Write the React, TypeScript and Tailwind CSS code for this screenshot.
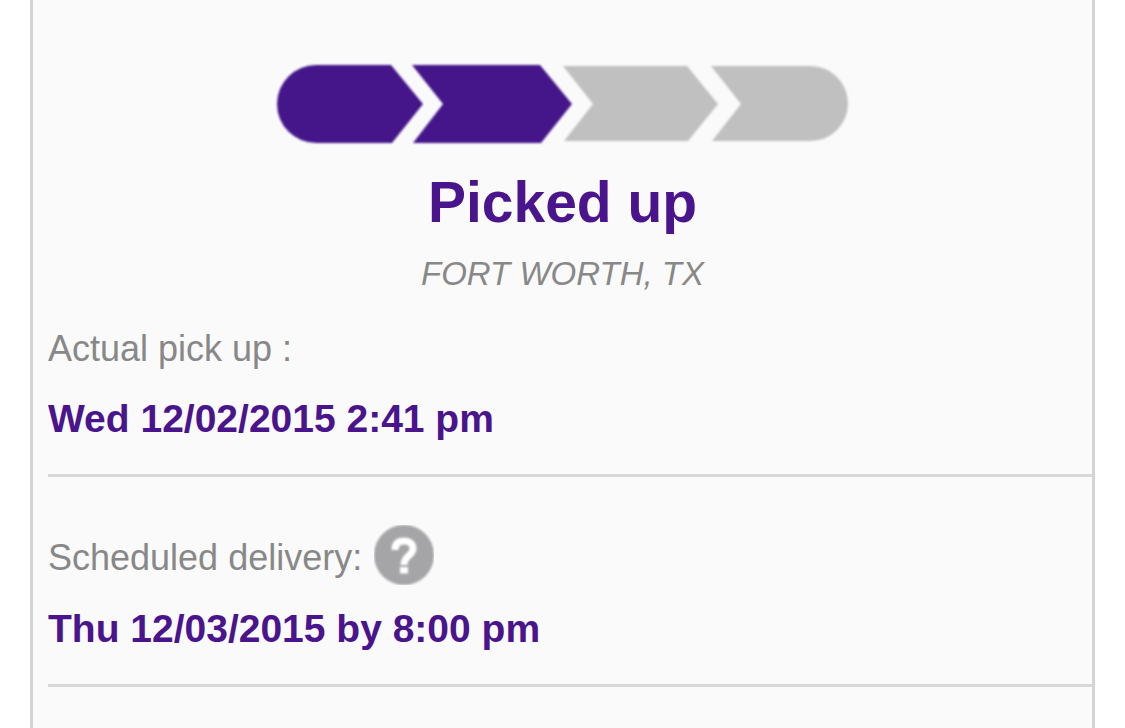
function ProgressBar() {
  return (
    <svg width="575" height="84" viewBox="275 62 575 84" role="img" aria-label="Step 2 of 4" className="block">
      <filter id="soft-steps" x="-5%" y="-5%" width="110%" height="110%" colorInterpolationFilters="sRGB">
        <feGaussianBlur stdDeviation="0.9" />
      </filter>
      <g filter="url(#soft-steps)">
        <path fill="#45158a" d="M316 65H391L423 104L392 143H316A39 39 0 0 1 316 65Z" />
        <path fill="#45158a" d="M412 65H540L572 104L541 143H413L443 104Z" />
        <path fill="#c0c0c0" d="M563 66H687L718 104L688 141H564L593 104Z" />
        <path fill="#c0c0c0" d="M711 66H810.500A37.500 37.500 0 0 1 810.500 141H712L741 104Z" />
      </g>
    </svg>
  );
}

function HelpIcon() {
  return (
    <svg width="60" height="60" viewBox="0 0 60 60" aria-hidden="true" className="block">
      <filter id="soft-help" x="-5%" y="-5%" width="110%" height="110%" colorInterpolationFilters="sRGB">
        <feGaussianBlur stdDeviation="1" />
      </filter>
      <g filter="url(#soft-help)">
        <circle cx="30" cy="30" r="30" fill="#a5a5a8" />
        <path d="M21 25C21 19 24 16 30 16C36 16 39 19 39 23.500C39 31 30 30 30 40" fill="none" stroke="#fff" strokeWidth="7" />
        <rect x="26" y="42" width="8" height="6.500" fill="#fff" />
      </g>
    </svg>
  );
}

export default function App() {
  return (
    <div className="min-h-screen bg-white px-[30px] font-['Liberation_Sans',Arial,sans-serif]">
      <main className="min-h-screen border-x-3 border-[#d6d2d5] bg-[#fafafa] pt-[62px] pl-[15px]">
        <section className="flex flex-col items-center pr-[15px]">
          <ProgressBar />
          <h1 className="mt-6 text-[57px] leading-[64px] font-bold text-[#4a148c]">Picked up</h1>
          <p className="mt-5 text-[33px] leading-10 text-[#888888] italic">FORT WORTH, TX</p>
        </section>
        <dl>
          <div className="border-b-3 border-[#d8d8d8] pt-[35px] pb-[35px]">
            <dt className="text-[36px] leading-10 text-[#888888]">Actual pick up :</dt>
            <dd className="mt-[30px] text-[39px] leading-10 font-bold text-[#4a148c]">Wed 12/02/2015 2:41 pm</dd>
          </div>
          <div className="border-b-3 border-[#d8d8d8] pt-12 pb-[35px]">
            <dt className="flex items-center gap-3 text-[36px] leading-10 text-[#888888]">
              <span className="pt-[6px]">Scheduled delivery:</span>
              <button type="button" aria-label="About scheduled delivery"><HelpIcon /></button>
            </dt>
            <dd className="mt-6 text-[39px] leading-10 font-bold text-[#4a148c]">Thu 12/03/2015 by 8:00 pm</dd>
          </div>
        </dl>
      </main>
    </div>
  );
}
